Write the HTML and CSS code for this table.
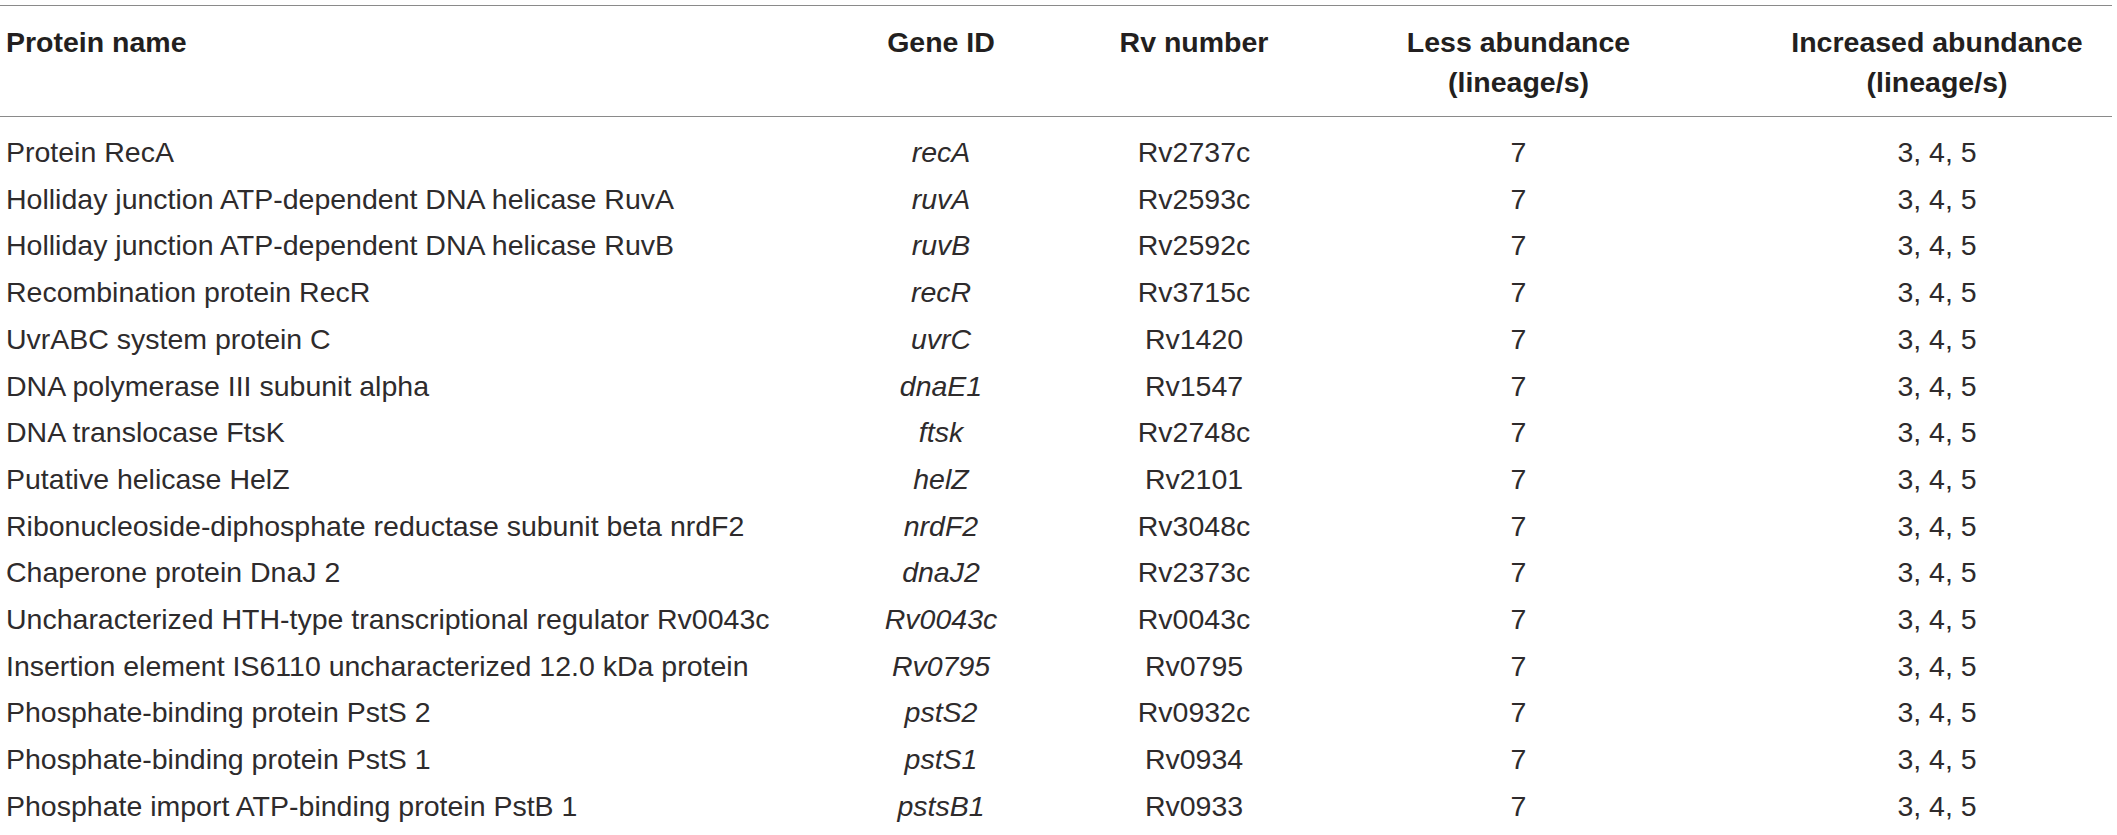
FILE: index.html
```html
<!DOCTYPE html>
<html lang="en">
<head>
<meta charset="utf-8">
<title>Proteins with differential abundance</title>
<link rel="stylesheet" href="styles.css">
</head>
<body>
<table class="data-table">
  <colgroup>
    <col class="col-name">
    <col class="col-gene">
    <col class="col-rv">
    <col class="col-less">
    <col class="col-more">
  </colgroup>
  <thead>
    <tr>
      <th class="c-name">Protein name</th>
      <th class="c-gene">Gene ID</th>
      <th class="c-rv">Rv number</th>
      <th class="c-less">Less abundance<br>(lineage/s)</th>
      <th class="c-more">Increased abundance<br>(lineage/s)</th>
    </tr>
  </thead>
  <tbody>
    <tr class="first-row"><td class="c-name">Protein RecA</td><td class="c-gene"><i>recA</i></td><td class="c-rv">Rv2737c</td><td class="c-less">7</td><td class="c-more">3, 4, 5</td></tr>
    <tr><td class="c-name">Holliday junction ATP-dependent DNA helicase RuvA</td><td class="c-gene"><i>ruvA</i></td><td class="c-rv">Rv2593c</td><td class="c-less">7</td><td class="c-more">3, 4, 5</td></tr>
    <tr><td class="c-name">Holliday junction ATP-dependent DNA helicase RuvB</td><td class="c-gene"><i>ruvB</i></td><td class="c-rv">Rv2592c</td><td class="c-less">7</td><td class="c-more">3, 4, 5</td></tr>
    <tr><td class="c-name">Recombination protein RecR</td><td class="c-gene"><i>recR</i></td><td class="c-rv">Rv3715c</td><td class="c-less">7</td><td class="c-more">3, 4, 5</td></tr>
    <tr><td class="c-name">UvrABC system protein C</td><td class="c-gene"><i>uvrC</i></td><td class="c-rv">Rv1420</td><td class="c-less">7</td><td class="c-more">3, 4, 5</td></tr>
    <tr><td class="c-name">DNA polymerase III subunit alpha</td><td class="c-gene"><i>dnaE1</i></td><td class="c-rv">Rv1547</td><td class="c-less">7</td><td class="c-more">3, 4, 5</td></tr>
    <tr><td class="c-name">DNA translocase FtsK</td><td class="c-gene"><i>ftsk</i></td><td class="c-rv">Rv2748c</td><td class="c-less">7</td><td class="c-more">3, 4, 5</td></tr>
    <tr><td class="c-name">Putative helicase HelZ</td><td class="c-gene"><i>helZ</i></td><td class="c-rv">Rv2101</td><td class="c-less">7</td><td class="c-more">3, 4, 5</td></tr>
    <tr><td class="c-name">Ribonucleoside-diphosphate reductase subunit beta nrdF2</td><td class="c-gene"><i>nrdF2</i></td><td class="c-rv">Rv3048c</td><td class="c-less">7</td><td class="c-more">3, 4, 5</td></tr>
    <tr><td class="c-name">Chaperone protein DnaJ 2</td><td class="c-gene"><i>dnaJ2</i></td><td class="c-rv">Rv2373c</td><td class="c-less">7</td><td class="c-more">3, 4, 5</td></tr>
    <tr><td class="c-name">Uncharacterized HTH-type transcriptional regulator Rv0043c</td><td class="c-gene"><i>Rv0043c</i></td><td class="c-rv">Rv0043c</td><td class="c-less">7</td><td class="c-more">3, 4, 5</td></tr>
    <tr><td class="c-name">Insertion element IS6110 uncharacterized 12.0 kDa protein</td><td class="c-gene"><i>Rv0795</i></td><td class="c-rv">Rv0795</td><td class="c-less">7</td><td class="c-more">3, 4, 5</td></tr>
    <tr><td class="c-name">Phosphate-binding protein PstS 2</td><td class="c-gene"><i>pstS2</i></td><td class="c-rv">Rv0932c</td><td class="c-less">7</td><td class="c-more">3, 4, 5</td></tr>
    <tr><td class="c-name">Phosphate-binding protein PstS 1</td><td class="c-gene"><i>pstS1</i></td><td class="c-rv">Rv0934</td><td class="c-less">7</td><td class="c-more">3, 4, 5</td></tr>
    <tr><td class="c-name">Phosphate import ATP-binding protein PstB 1</td><td class="c-gene"><i>pstsB1</i></td><td class="c-rv">Rv0933</td><td class="c-less">7</td><td class="c-more">3, 4, 5</td></tr>
  </tbody>
</table>
</body>
</html>
```

FILE: styles.css
```css
html, body {
  margin: 0;
  padding: 0;
  background: #ffffff;
}

body {
  padding-top: 5px;
  font-family: "Liberation Sans", Arial, Helvetica, sans-serif;
  color: #231f20;
}

.data-table {
  width: 2112px;
  border-collapse: collapse;
  table-layout: fixed;
}

.col-name { width: 820px; }
.col-gene { width: 242px; }
.col-rv { width: 264px; }
.col-less { width: 385px; }
.col-more { width: 401px; }

.data-table thead tr {
  border-top: 1px solid #8a8a8a;
  border-bottom: 1px solid #8a8a8a;
}

.data-table th {
  font-weight: 700;
  font-size: 28.5px;
  line-height: 40px;
  vertical-align: top;
  padding: 16px 0 14px 0;
  color: #231f20;
}

.data-table td {
  font-size: 28.5px;
  line-height: 46.7px;
  padding: 0;
  white-space: nowrap;
  vertical-align: top;
  color: #2e2b2c;
}

.data-table .first-row td {
  padding-top: 12px;
}

.c-name {
  text-align: left;
  padding-left: 6px !important;
}

.c-gene,
.c-rv,
.c-less {
  text-align: center;
}

.c-more {
  text-align: center;
  padding-left: 51px !important;
}

.data-table i {
  font-style: italic;
}
```
